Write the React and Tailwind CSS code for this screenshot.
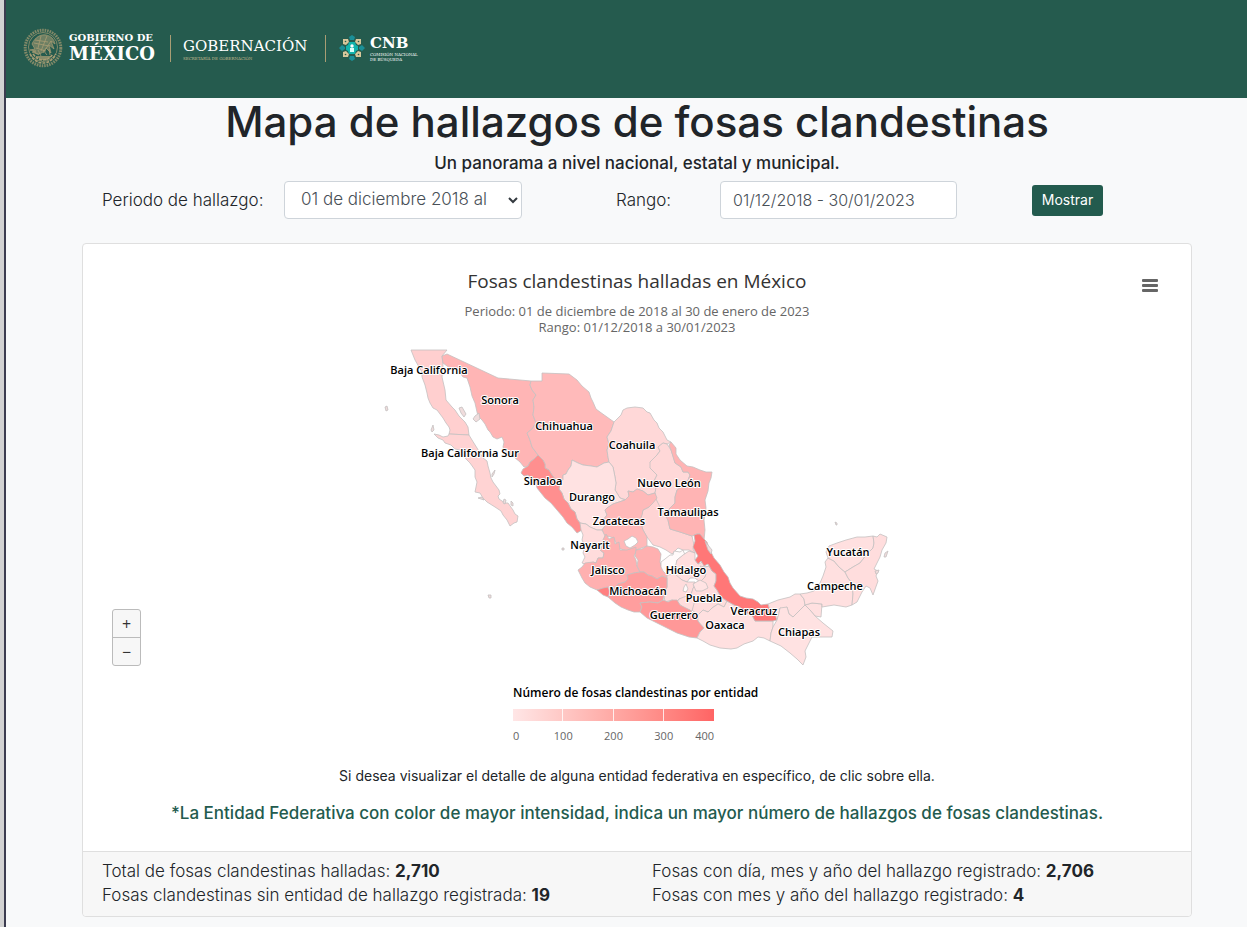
// src/App.jsx
import { useState } from 'react';

const estados = [
  { nombre: 'Baja California', color: '#ffcfcf', puntos: '411,350 447,350 442,356 443,365 442,377 445,390 446,400 452,407 455,410 459,416 465,422 468,427 469,435 449,434 450,430 449,427 446,423 443,418 437,410 433,408 430,403 428,398 427,393 425,385 422,377 422,372 419,367 415,360' },
  { nombre: 'Baja California Sur', color: '#ffd3d3', puntos: '449,434 469,435 472,440 477,448 483,458 487,461 488,466 490,473 491,478 493,482 499,490 500,494 498,496 499,499 505,503 508,503 513,510 515,514 518,516 517,522 514,523 510,526 507,520 503,515 501,511 495,507 487,502 483,498 480,493 475,492 476,487 477,482 475,477 475,470 470,463 466,459 460,450 455,449 451,445 445,443 443,440 438,438 434,434 439,435 443,437 448,436' },
  { nombre: 'Sonora', color: '#ffb5b5', puntos: '442,356 447,354 498,378 531,381 530,385 532,390 536,395 533,400 534,407 533,415 536,423 532,429 527,433 530,440 532,447 535,451 538,455 534,459 530,462 528,466 524,467 520,462 514,457 510,455 505,452 503,447 504,442 502,437 497,439 493,437 490,432 488,430 485,424 482,420 478,416 477,412 475,403 472,396 470,387 467,378 463,377 458,370 452,369 447,366 443,363' },
  { nombre: 'Chihuahua', color: '#ffbaba', puntos: '531,381 542,381 542,373 569,374 577,380 582,386 589,392 591,398 593,402 596,409 600,412 607,417 614,422 611,431 607,437 609,444 607,450 608,457 609,462 604,463 597,467 591,466 583,465 578,463 572,460 571,466 568,470 566,474 563,475 563,480 560,483 556,480 552,475 549,470 545,468 545,464 543,460 540,458 538,455 535,451 532,447 530,440 527,433 532,429 536,423 533,415 534,407 533,400 536,395 532,390 530,385' },
  { nombre: 'Coahuila', color: '#ffd8d8', puntos: '614,422 621,415 623,410 627,408 635,407 643,408 647,412 650,413 654,420 657,423 659,428 663,432 667,440 671,442 667,444 663,443 658,447 660,451 657,455 654,460 650,462 652,465 650,468 654,472 657,475 655,479 653,483 656,488 655,493 648,495 643,491 637,489 633,492 628,491 629,496 627,500 620,498 617,493 615,490 616,483 615,477 613,467 609,462 608,457 607,450 609,444 607,437 611,431' },
  { nombre: 'Durango', color: '#ffe2e2', puntos: '572,460 578,463 583,465 591,466 597,467 604,463 609,462 613,467 615,477 616,483 615,490 620,498 625,500 619,502 613,504 607,508 605,510 607,515 603,520 605,526 602,530 597,530 590,527 586,524 580,523 577,519 575,512 571,509 568,503 564,499 562,493 559,489 560,483 563,480 563,475 566,474 568,470 571,466' },
  { nombre: 'Sinaloa', color: '#ff8f8f', puntos: '538,455 543,460 545,464 545,468 549,470 552,475 556,480 560,483 559,489 562,493 564,499 568,503 571,509 575,512 577,519 580,523 582,530 577,533 572,527 567,523 563,517 557,510 551,503 545,498 537,488 536,483 532,480 528,475 524,476 521,473 523,469 528,466 530,462 534,459' },
  { nombre: 'San Luis Potosí', color: '#ffd4d4', puntos: '655,493 660,503 666,512 668,520 670,529 680,532 692,536 694,545 693,549 695,553 689,550 683,550 678,548 672,554 666,550 660,547 653,545 647,537 643,530 640,520 643,510 649,507' },
  { nombre: 'Nuevo León', color: '#ffd8d8', puntos: '663,443 667,444 671,450 673,456 675,463 681,467 683,472 688,472 690,475 687,483 682,487 677,490 675,497 675,503 671,507 668,510 669,516 666,517 663,511 660,507 655,497 655,493 656,488 653,483 657,475 650,468 650,462 657,455 660,451 658,447' },
  { nombre: 'Tamaulipas', color: '#ffb4b4', puntos: '671,442 676,448 676,454 680,460 687,466 693,467 700,470 706,472 712,472 711,478 709,483 708,491 705,500 706,508 704,520 705,530 704,540 700,534 697,534 692,536 680,532 670,529 668,520 666,517 669,516 668,510 675,503 675,497 677,490 687,483 690,475 688,472 683,472 681,467 675,463 671,450 669,445' },
  { nombre: 'Zacatecas', color: '#ffb9b9', puntos: '625,500 629,496 628,491 633,492 637,489 643,491 648,495 655,493 657,498 653,503 649,507 643,510 642,515 640,520 643,530 647,537 647,546 636,550 627,551 618,548 614,538 607,536 605,540 603,532 602,530 605,526 603,520 607,515 605,510 607,508 613,504' },
  { nombre: 'Nayarit', color: '#ffdcdc', puntos: '580,523 586,524 590,527 597,530 602,530 605,536 603,540 603,545 600,550 604,553 603,558 598,558 596,563 593,562 588,565 582,563 585,557 583,553 585,546 582,540 583,535 581,530' },
  { nombre: 'Jalisco', color: '#ffb0b0', puntos: '578,570 582,567 585,563 593,562 596,563 598,558 603,558 604,553 600,550 603,545 603,540 606,534 609,539 614,537 615,544 619,542 620,550 627,550 636,547 636,552 634,556 636,560 637,566 640,572 634,573 627,575 628,579 625,582 618,584 615,588 608,587 603,590 597,590 590,587 585,583 582,578' },
  { nombre: 'Aguascalientes', color: '#ffffff', puntos: '624,541 628,539 632,536 636,538 638,542 635,545 630,548 626,546' },
  { nombre: 'Guanajuato', color: '#ffb0b0', puntos: '636,550 642,549 647,546 653,547 658,549 661,554 660,562 662,568 668,575 667,578 662,576 657,579 652,576 648,575 644,572 640,572 637,566 638,560 635,556' },
  { nombre: 'Querétaro', color: '#fffafa', puntos: '661,562 665,559 670,555 673,555 674,551 680,552 683,550 685,555 681,557 677,560 677,565 675,568 670,570 667,575 663,571 661,567' },
  { nombre: 'Hidalgo', color: '#ffdede', puntos: '683,555 689,551 695,553 695,560 698,564 703,562 705,567 709,566 712,571 706,574 705,577 700,582 695,578 690,578 687,582 682,580 675,576 675,568 677,560' },
  { nombre: 'Estado de México', color: '#ffdcdc', puntos: '667,575 675,574 682,580 687,582 695,582 693,590 690,595 686,598 679,599 677,602 672,600 665,602 664,595 667,587' },
  { nombre: 'Puebla', color: '#ffdcdc', puntos: '700,566 705,567 709,566 712,571 716,574 716,581 714,586 717,590 721,597 727,601 724,607 718,604 712,608 708,612 703,610 698,615 692,610 693,602 691,595 693,588 700,582 705,577 706,574' },
  { nombre: 'Tlaxcala', color: '#ffe3e3', puntos: '693,584 700,580 706,583 708,588 702,591 696,591' },
  { nombre: 'Morelos', color: '#ffdcdc', puntos: '677,602 679,599 684,597 690,595 695,600 692,611 684,608' },
  { nombre: 'Ciudad de México', color: '#fffafa', puntos: '684,587 686,584 688,589 686,592 683,591' },
  { nombre: 'Michoacán', color: '#ff9e9e', puntos: '610,588 615,588 618,584 625,582 628,579 627,575 634,573 640,572 644,572 648,575 652,576 657,579 662,576 667,578 667,587 664,595 663,600 658,603 650,602 640,603 642,607 640,612 634,612 628,610 621,607 615,603 608,597' },
  { nombre: 'Colima', color: '#ff8080', puntos: '597,590 603,588 608,587 610,592 608,597 603,595' },
  { nombre: 'Guerrero', color: '#ff9898', puntos: '640,603 650,602 658,603 663,600 668,602 672,600 677,600 680,605 684,607 690,610 694,614 698,615 698,621 704,628 700,632 697,638 689,637 677,633 667,628 657,623 647,618 640,612 642,607' },
  { nombre: 'Oaxaca', color: '#ffe0e0', puntos: '698,615 703,610 708,612 712,608 718,604 724,607 727,601 734,605 740,607 746,613 752,615 755,621 773,621 773,627 771,633 770,641 764,638 758,637 753,641 744,644 737,648 731,649 720,648 710,645 703,641 697,638 700,632 704,628 698,621' },
  { nombre: 'Veracruz', color: '#ff7777', puntos: '694,535 697,534 700,534 704,539 707,542 709,548 711,552 714,558 720,565 724,572 728,577 730,583 733,588 740,596 746,598 753,599 758,602 761,605 768,604 770,610 774,611 777,616 777,620 773,621 755,621 752,615 746,613 740,607 734,605 727,601 721,597 717,590 714,586 716,581 716,574 712,571 708,564 704,566 701,561 698,564 695,560 698,556 695,551 693,547 695,541' },
  { nombre: 'Tabasco', color: '#ffe0e0', puntos: '768,604 778,600 790,597 795,594 800,594 804,599 805,605 812,603 822,604 821,617 815,616 810,610 805,605 799,611 793,617 789,614 787,607 783,609 780,608 779,613 777,620 774,611 770,610' },
  { nombre: 'Chiapas', color: '#ffe2e2', puntos: '777,620 779,613 780,608 787,607 789,614 793,617 799,611 805,605 810,610 815,616 823,623 833,631 832,637 812,637 809,643 805,651 806,657 803,665 797,659 790,653 781,646 770,641 771,633 773,627' },
  { nombre: 'Campeche', color: '#ffe0e0', puntos: '800,594 807,593 814,591 820,583 823,576 826,567 825,562 828,558 834,561 839,567 845,572 848,578 852,583 853,594 852,605 846,607 834,605 822,607 822,604 812,603 805,605 804,599' },
  { nombre: 'Yucatán', color: '#ffe0e0', puntos: '828,558 826,552 829,546 837,543 846,540 857,537 865,537 873,536 874,543 873,548 867,554 860,563 853,567 845,572 839,567 834,561' },
  { nombre: 'Quintana Roo', color: '#ffdddd', puntos: '873,536 877,537 880,534 887,537 886,543 882,550 880,557 877,563 874,569 878,571 876,576 878,581 873,595 870,588 866,586 862,592 857,602 852,605 853,594 852,583 848,578 845,572 853,567 860,563 867,554 873,548 874,543' },
];

const islas = [
  '385,407 387,406 388,410 386,411',
  '431,430 433,425 434,430 432,432',
  '459,408 462,407 466,414 464,417 461,413',
  '475,416 479,413 480,419 476,422 473,419',
  '478,498 482,497 484,500 481,499',
  '492,474 495,470 494,474 492,477',
  '488,595 491,595 491,598 489,598',
  '562,548 564,548 564,550 562,550',
  '835,522 837,523 837,525 836,525',
  '885,553 888,551 886,557 884,557',
  '875,571 879,570 878,573 876,574',
  '705,541 708,545 712,550 711,554 708,550',
  '504,499 506,500 505,504 503,503',
  '511,501 513,503 513,506 511,505',
];

const etiquetas = [
  ['Baja California', 429, 374],
  ['Sonora', 500, 404],
  ['Chihuahua', 564, 430],
  ['Coahuila', 632, 449],
  ['Baja California Sur', 470, 457],
  ['Sinaloa', 543, 485],
  ['Nuevo León', 669, 487],
  ['Durango', 592, 501],
  ['Tamaulipas', 688, 516],
  ['Zacatecas', 619, 525],
  ['Nayarit', 590, 549],
  ['Yucatán', 848, 556],
  ['Hidalgo', 686, 574],
  ['Jalisco', 608, 574],
  ['Campeche', 835, 590],
  ['Michoacán', 638, 595],
  ['Puebla', 704, 602],
  ['Veracruz', 754, 615],
  ['Guerrero', 674, 619],
  ['Oaxaca', 725, 629],
  ['Chiapas', 799, 636],
];

function Escudo() {
  return (
    <svg viewBox="0 0 40 42" className="h-[42px] w-10" fill="none" stroke="#a99d74" aria-hidden="true">
      <circle cx="20" cy="21" r="17.8" strokeWidth="3" strokeDasharray="1.6 .9" opacity=".7" />
      <circle cx="20" cy="20" r="14.5" strokeWidth=".7" />
      <path d="M9 17c3-7 9-10 14-9 5 1 8 4 9 9l-4-3 3 8-5-4 2 8-5-5c-2 4-5 6-9 6l-5-2 4-1-6-1 5-1z" fill="#a99d74" fillOpacity=".55" strokeWidth=".7" />
      <path d="M12 13l13 2M11 16l15 3M13 21l10 3M18 9l-3 12M24 9l-6 15M28 14l-8 12M10 24l6 4M15 23l3 6M20 23l4 5M26 22l1 6" strokeWidth=".8" />
      <path d="M7 27c3 6 8 9 13 9s10-3 13-9M10 27c3 4 6 6 10 6s7-2 10-6" strokeWidth="1.6" strokeDasharray="3 1" />
      <path d="M13 30h14M16 32h8" strokeWidth="1.4" />
    </svg>
  );
}

function LogoCNB() {
  return (
    <svg viewBox="0 0 26 26" className="size-[26px]" aria-hidden="true">
      <g fill="#1b8f97">
        <path d="M13 0l3 2-1 3h-4l-1-3zM13 26l3-2-1-3h-4l-1 3zM0 13l3-3 3 2v2l-3 2zM26 13l-3-3-3 2v2l3 2z" />
        <path d="M10 7h6l1 3 2 1v4l-2 1-1 3h-6l-1-3-2-1v-4l2-1z" fill="#12b3ac" />
      </g>
      <g fill="#d8c79b">
        <path d="M4 4h5l1 3-3 3-3-1zM22 4h-5l-1 3 3 3 3-1zM4 22h5l1-3-3-3-3 1zM22 22h-5l-1-3 3-3 3 1z" />
      </g>
      <g fill="#285c4d">
        <circle cx="6.5" cy="6.5" r=".8" />
        <circle cx="19.5" cy="6.5" r=".8" />
        <circle cx="6.5" cy="19.5" r=".8" />
        <circle cx="19.5" cy="19.5" r=".8" />
      </g>
      <circle cx="13" cy="11" r="1.7" fill="#fff" />
      <path d="M11 13h4v4h-4z" fill="#d9fffb" />
    </svg>
  );
}

function Encabezado() {
  return (
    <header className="flex h-[98px] items-center bg-[#255b4e] pb-[2px] pl-[17px] font-['DejaVu_Serif',serif] text-white">
      <div className="flex items-center">
        <Escudo />
        <div className="ml-[6px] w-[89px] font-bold whitespace-nowrap">
          <div className="text-[10px] leading-3">GOBIERNO DE</div>
          <div className="text-[18px] leading-5">MÉXICO</div>
        </div>
        <div className="ml-3 h-[27px] w-px bg-[#a99d74]" />
        <div className="ml-3 w-[130px] whitespace-nowrap">
          <div className="text-[15px] leading-5">GOBERNACIÓN</div>
          <div className="text-[4px] leading-[5px] text-[#c5b98f]">SECRETARÍA DE GOBERNACIÓN</div>
        </div>
        <div className="ml-3 h-[27px] w-px bg-[#a99d74]" />
        <div className="ml-[13px]"><LogoCNB /></div>
        <div className="ml-[5px] whitespace-nowrap">
          <div className="text-[15px] leading-[18px] font-bold">CNB</div>
          <div className="text-[4px] leading-[5px]">COMISIÓN NACIONAL<br />DE BÚSQUEDA</div>
        </div>
      </div>
    </header>
  );
}

function Mapa() {
  return (
    <svg viewBox="377 340 520 334" className="mx-auto w-full max-w-[520px]" role="img" aria-label="Mapa de México">
      <g stroke="#c4c0c0" strokeWidth="0.8" strokeLinejoin="round">
        {estados.map((e) => (
          <polygon key={e.nombre} points={e.puntos} fill={e.color} />
        ))}
        {islas.map((p) => (
          <polygon key={p} points={p} fill="#f0dcdc" />
        ))}
      </g>
      <g className="font-['Open_Sans',sans-serif] text-[11px] font-semibold" textAnchor="middle" fill="#000" stroke="#fff" strokeWidth="2" strokeLinejoin="round" paintOrder="stroke">
        {etiquetas.map(([texto, x, y]) => (
          <text key={texto} x={x} y={y}>{texto}</text>
        ))}
      </g>
    </svg>
  );
}

function Leyenda() {
  return (
    <div className="mx-auto w-[248px]">
      <p className="text-xs leading-4 font-semibold whitespace-nowrap text-black">Número de fosas clandestinas por entidad</p>
      <div className="mt-2 grid h-3 w-[201px] grid-cols-4 divide-x divide-white/80 bg-linear-to-r from-[#ffe6e6] to-[#ff6464]">
        <span />
        <span />
        <span />
        <span />
      </div>
      <div className="relative mt-[7px] h-4 w-[201px] text-[11px] leading-4 text-[#666666]">
        <span className="absolute left-0">0</span>
        <span className="absolute left-1/4 -translate-x-1/2">100</span>
        <span className="absolute left-1/2 -translate-x-1/2">200</span>
        <span className="absolute left-3/4 -translate-x-1/2">300</span>
        <span className="absolute right-0">400</span>
      </div>
    </div>
  );
}

export default function App() {
  const [periodo, setPeriodo] = useState('1');
  const [rango, setRango] = useState('01/12/2018 - 30/01/2023');

  return (
    <div className="flex min-h-screen bg-[#f8f9fa] font-[Inter,sans-serif] text-[#212529]">
      <div className="w-[6px] shrink-0 border-r-2 border-[#3c3c50] bg-[#d2d2d2]" />
      <div className="min-w-0 flex-1">
        <Encabezado />
        <main className="pb-[10px] pl-[21px]">
          <h1 className="text-center text-[42px] leading-[48px] font-medium">Mapa de hallazgos de fosas clandestinas</h1>
          <p className="mt-[5px] text-center text-[17px] leading-6 font-medium">Un panorama a nivel nacional, estatal y municipal.</p>

          <div className="mx-auto max-w-[1110px]">
            <form className="mt-[6px] flex items-center pl-5" onSubmit={(e) => e.preventDefault()}>
              <label htmlFor="periodo" className="w-[182px] shrink-0 text-[17px] leading-6 font-light">Periodo de hallazgo:</label>
              <div className="relative w-[238px]">
                <select id="periodo" value={periodo} onChange={(e) => setPeriodo(e.target.value)} className="h-[38px] w-full appearance-none rounded border border-[#ced4da] bg-white pr-[30px] pl-4 text-[17px] font-light text-[#495057]">
                  <option value="1">01 de diciembre 2018 al 30 de enero de 2023</option>
                  <option value="2">Otro periodo</option>
                </select>
                <svg viewBox="0 0 10 7" className="pointer-events-none absolute top-4 right-1 h-[7px] w-[10px]" fill="none" stroke="#343a40" strokeWidth="2">
                  <path d="M1 1l4 4 4-4" />
                </svg>
              </div>
              <label htmlFor="rango" className="ml-[94px] w-[104px] shrink-0 text-[17px] leading-6 font-light">Rango:</label>
              <input id="rango" type="text" value={rango} onChange={(e) => setRango(e.target.value)} className="h-[38px] w-[237px] rounded border border-[#ced4da] bg-white px-3 font-light text-[#495057]" />
              <button type="submit" className="ml-[75px] h-[31px] w-[71px] rounded-[3px] bg-[#235b4e] text-sm text-white">Mostrar</button>
            </form>

            <section className="mt-6 rounded border border-[#dfdfdf] bg-white">
              <div className="relative pt-[26px] pb-[26px] text-center">
                <div className="font-['Open_Sans',sans-serif]">
                  <h2 className="text-[19px] leading-[22px] text-[#333333]">Fosas clandestinas halladas en México</h2>
                  <p className="mt-[11px] text-[13px] leading-4 text-[#666666]">
                    Periodo: 01 de diciembre de 2018 al 30 de enero de 2023<br />
                    Rango: 01/12/2018 a 30/01/2023
                  </p>
                  <button type="button" aria-label="Menú de la gráfica" className="absolute top-[35px] right-[33px] flex w-4 flex-col gap-[2px]">
                    <span className="h-[3px] w-full rounded-[1px] bg-[#666666]" />
                    <span className="h-[3px] w-full rounded-[1px] bg-[#666666]" />
                    <span className="h-[3px] w-full rounded-[1px] bg-[#666666]" />
                  </button>
                  <div className="mt-[5px]"><Mapa /></div>
                  <div className="absolute top-[365px] left-[29px] flex w-[29px] flex-col overflow-hidden rounded-[3px] border border-[#bbbbbb] bg-[#f7f7f7] text-base leading-none text-[#333333]">
                    <button type="button" className="h-7 border-b border-[#bbbbbb]">+</button>
                    <button type="button" className="h-[27px]">−</button>
                  </div>
                  <div className="mt-[11px] text-left"><Leyenda /></div>
                </div>
                <p className="mt-[21px] text-sm leading-[21px]">Si desea visualizar el detalle de alguna entidad federativa en específico, de clic sobre ella.</p>
                <p className="mt-[15px] text-[17px] leading-6 font-medium text-[#235b4e]">*La Entidad Federativa con color de mayor intensidad, indica un mayor número de hallazgos de fosas clandestinas.</p>
              </div>
              <footer className="grid grid-cols-2 rounded-b border-t border-[#dfdfdf] bg-[#f7f7f7] px-[19px] pt-[7px] pb-[9px] text-[17px] leading-6 font-light">
                <p>Total de fosas clandestinas halladas: <b className="font-bold">2,710</b></p>
                <p className="pl-[15px]">Fosas con día, mes y año del hallazgo registrado: <b className="font-bold">2,706</b></p>
                <p>Fosas clandestinas sin entidad de hallazgo registrada: <b className="font-bold">19</b></p>
                <p className="pl-[15px]">Fosas con mes y año del hallazgo registrado: <b className="font-bold">4</b></p>
              </footer>
            </section>
          </div>
        </main>
      </div>
    </div>
  );
}
